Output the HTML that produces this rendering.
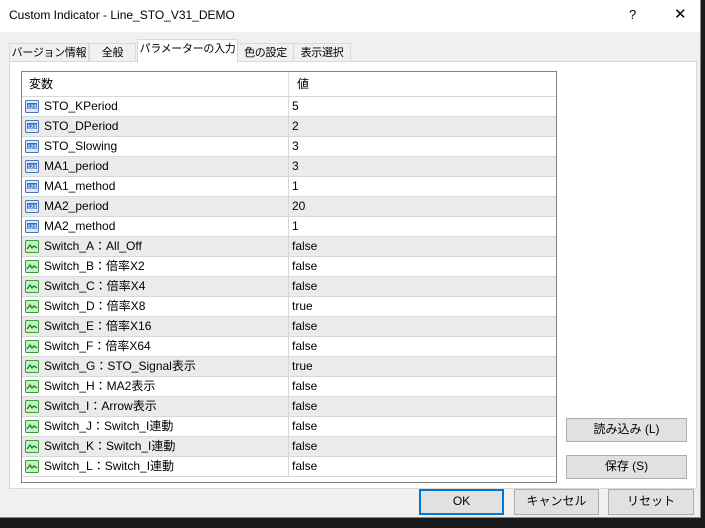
<html><head><style>
*{box-sizing:border-box}
body{margin:0;width:705px;height:528px;background:#1a1a1a;font-family:"Liberation Sans","Noto Sans CJK JP",sans-serif;font-size:12px;color:#000;position:relative;overflow:hidden}
.win{position:absolute;left:0;top:0;width:701px;height:518px;background:#f0f0f0;border-right:1px solid #888;border-bottom:1px solid #888}
.title{position:absolute;left:0;top:0;width:700px;height:32px;background:#fff;font-size:12px}
.tab{position:absolute;top:43px;height:19px;background:#f0f0f0;border:1px solid #d9d9d9;border-bottom:none;text-align:center;line-height:18px;white-space:nowrap;letter-spacing:-0.3px;font-size:11px}
.panel{position:absolute;left:9px;top:61px;width:688px;height:428px;background:#fff;border:1px solid #d9d9d9}
.list{position:absolute;left:21px;top:71px;width:536px;height:412px;border:1px solid #828282;background:#fff}
.row{position:absolute;left:0;width:534px;height:20px;border-bottom:1px solid #d8d8d8;line-height:19px}
.row.g{background:#ebebeb}
.n{position:absolute;left:22px}
.v{position:absolute;left:266px;border-left:1px solid #d8d8d8;height:20px;padding-left:3px;top:-1px;line-height:21px}
.ic{position:absolute;left:3px;top:3px;width:14px;height:13px}
.btn{position:absolute;background:#e1e1e1;border:1px solid #adadad;text-align:center;line-height:21px}
</style></head><body>
<div class="win">
<div class="title"><span style="position:absolute;left:9px;top:8px">Custom Indicator - Line_STO_V31_DEMO</span><span style="position:absolute;left:629px;top:7px;font-size:13px">?</span><span style="position:absolute;left:674px;top:5px;font-size:15px;font-weight:300">✕</span></div>
<div class="tab" style="left:9px;width:80px">バージョン情報</div>
<div class="tab" style="left:89px;width:47px">全般</div>
<div class="tab" style="left:237px;width:57px">色の設定</div>
<div class="tab" style="left:293px;width:58px">表示選択</div>
<div class="panel"></div>
<div class="tab" style="left:137px;top:39px;width:101px;height:24px;background:#fff;z-index:2;line-height:18px">パラメーターの入力</div>
<div class="list">
<div class="row" style="top:0;height:25px;line-height:24px"><span style="position:absolute;left:7px">変数</span><span style="position:absolute;left:266px;border-left:1px solid #e0e0e0;height:25px;padding-left:8px">値</span></div>
<div id="rows"></div>
</div>
<div class="btn" style="left:566px;top:418px;width:121px;height:24px">読み込み (L)</div>
<div class="btn" style="left:566px;top:455px;width:121px;height:24px">保存 (S)</div>
<div class="btn" style="left:419px;top:489px;width:85px;height:26px;border:2px solid #0078d7;line-height:21px">OK</div>
<div class="btn" style="left:514px;top:489px;width:85px;height:26px;line-height:23px">キャンセル</div>
<div class="btn" style="left:608px;top:489px;width:86px;height:26px;line-height:23px">リセット</div>
</div>
<script>
var d=[["STO_KPeriod","5",0],["STO_DPeriod","2",0],["STO_Slowing","3",0],["MA1_period","3",0],["MA1_method","1",0],["MA2_period","20",0],["MA2_method","1",0],["Switch_A：All_Off","false",1],["Switch_B：倍率X2","false",1],["Switch_C：倍率X4","false",1],["Switch_D：倍率X8","true",1],["Switch_E：倍率X16","false",1],["Switch_F：倍率X64","false",1],["Switch_G：STO_Signal表示","true",1],["Switch_H：MA2表示","false",1],["Switch_I：Arrow表示","false",1],["Switch_J：Switch_I連動","false",1],["Switch_K：Switch_I連動","false",1],["Switch_L：Switch_I連動","false",1]];
var h="";
var i123='<svg class="ic" viewBox="0 0 14 13"><rect x="0.5" y="0.5" width="13" height="12" rx="1" fill="#dbe8f8" stroke="#4a78b8"/><rect x="2" y="3" width="10" height="6" fill="#3a6cc0"/><text x="7" y="8.3" font-size="5.5" fill="#fff" text-anchor="middle" font-family="Liberation Sans" font-weight="bold">123</text></svg>';
var isw='<svg class="ic" viewBox="0 0 14 13"><rect x="0.5" y="0.5" width="13" height="12" rx="1" fill="#c8f0c8" stroke="#3aa03a"/><path d="M2 9 L5 5 L7 8 L9 6 L12 8" stroke="#1a7a1a" fill="none" stroke-width="1.3"/></svg>';
d.forEach(function(r,k){h+='<div class="row'+(k%2?' g':'')+'" style="top:'+(25+k*20)+'px">'+(r[2]?isw:i123)+'<span class="n">'+r[0]+'</span><span class="v">'+r[1]+'</span></div>';});
document.getElementById("rows").innerHTML=h;
</script>
</body></html>
